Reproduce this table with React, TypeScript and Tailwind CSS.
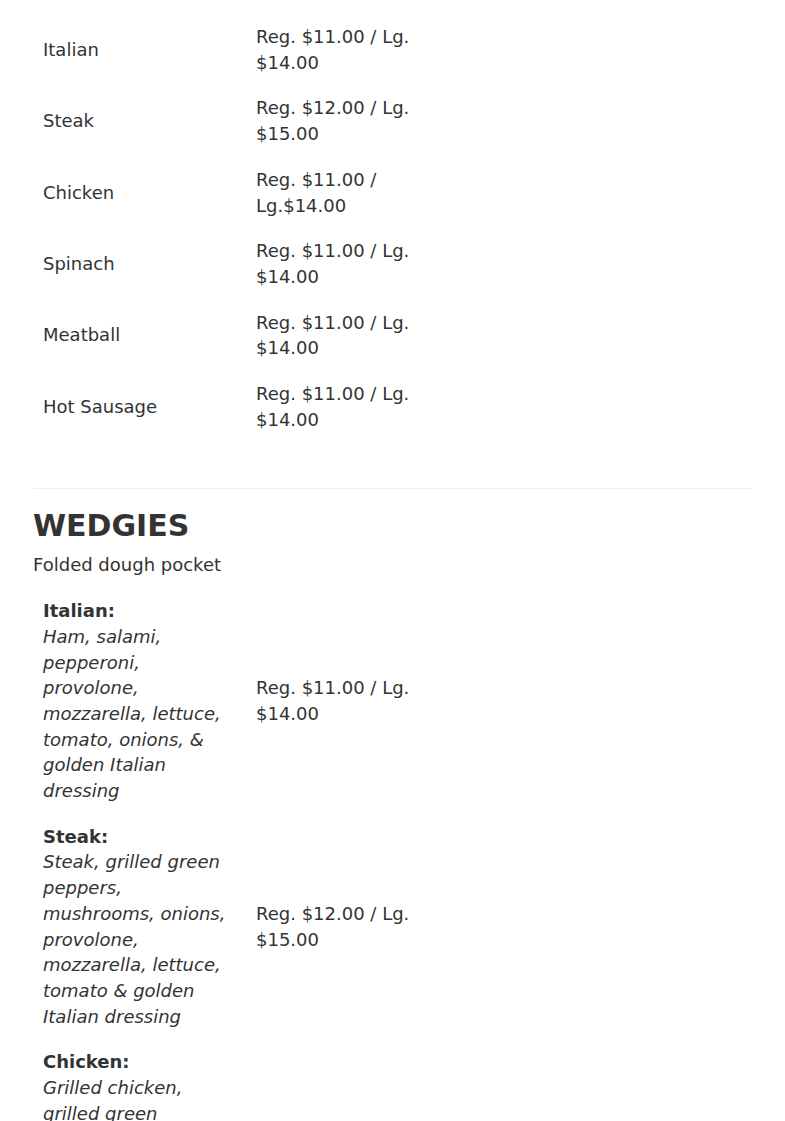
const calzones = [
  { name: "Italian", price: "Reg. $11.00 / Lg. $14.00" },
  { name: "Steak", price: "Reg. $12.00 / Lg. $15.00" },
  { name: "Chicken", price: "Reg. $11.00 / Lg.$14.00" },
  { name: "Spinach", price: "Reg. $11.00 / Lg. $14.00" },
  { name: "Meatball", price: "Reg. $11.00 / Lg. $14.00" },
  { name: "Hot Sausage", price: "Reg. $11.00 / Lg. $14.00" },
];

const wedgies = [
  {
    name: "Italian:",
    desc: "Ham, salami, pepperoni, provolone, mozzarella, lettuce, tomato, onions, & golden Italian dressing",
    price: "Reg. $11.00 / Lg. $14.00",
  },
  {
    name: "Steak:",
    desc: "Steak, grilled green peppers, mushrooms, onions, provolone, mozzarella, lettuce, tomato & golden Italian dressing",
    price: "Reg. $12.00 / Lg. $15.00",
  },
  {
    name: "Chicken:",
    desc: "Grilled chicken, grilled green peppers, mushrooms, onions, provolone, mozzarella, lettuce, tomato & golden Italian dressing",
    price: "Reg. $11.00 / Lg. $14.00",
  },
];

function MenuTable({ children }: { children: React.ReactNode }) {
  return (
    <table className="table-fixed border-collapse w-[413px]">
      <colgroup>
        <col className="w-[213px]" />
        <col className="w-[200px]" />
      </colgroup>
      <tbody>{children}</tbody>
    </table>
  );
}

export default function App() {
  return (
    <div className="min-h-screen bg-white text-[#333333] text-[18px] leading-[1.42857] font-['DejaVu_Sans',sans-serif]">
      <div className="mx-[33px] pt-[14px]">
        {/* Calzones (heading scrolled out of view) */}
        <MenuTable>
          {calzones.map((item) => (
            <tr key={item.name}>
              <td className="p-[10px] align-middle">{item.name}</td>
              <td className="p-[10px] align-middle">{item.price}</td>
            </tr>
          ))}
        </MenuTable>

        <hr className="mt-[46px] border-0 border-t border-[#eeeeee]" />

        {/* Wedgies */}
        <h2 className="mt-[19px] mb-[8px] text-[30px] leading-[36px] font-bold">WEDGIES</h2>
        <p className="mb-[10px]">Folded dough pocket</p>
        <MenuTable>
          {wedgies.map((item) => (
            <tr key={item.name}>
              <td className="p-[10px] align-middle">
                <strong className="font-bold">{item.name}</strong>
                <br />
                <em className="italic">{item.desc}</em>
              </td>
              <td className="p-[10px] align-middle">{item.price}</td>
            </tr>
          ))}
        </MenuTable>
      </div>
    </div>
  );
}
